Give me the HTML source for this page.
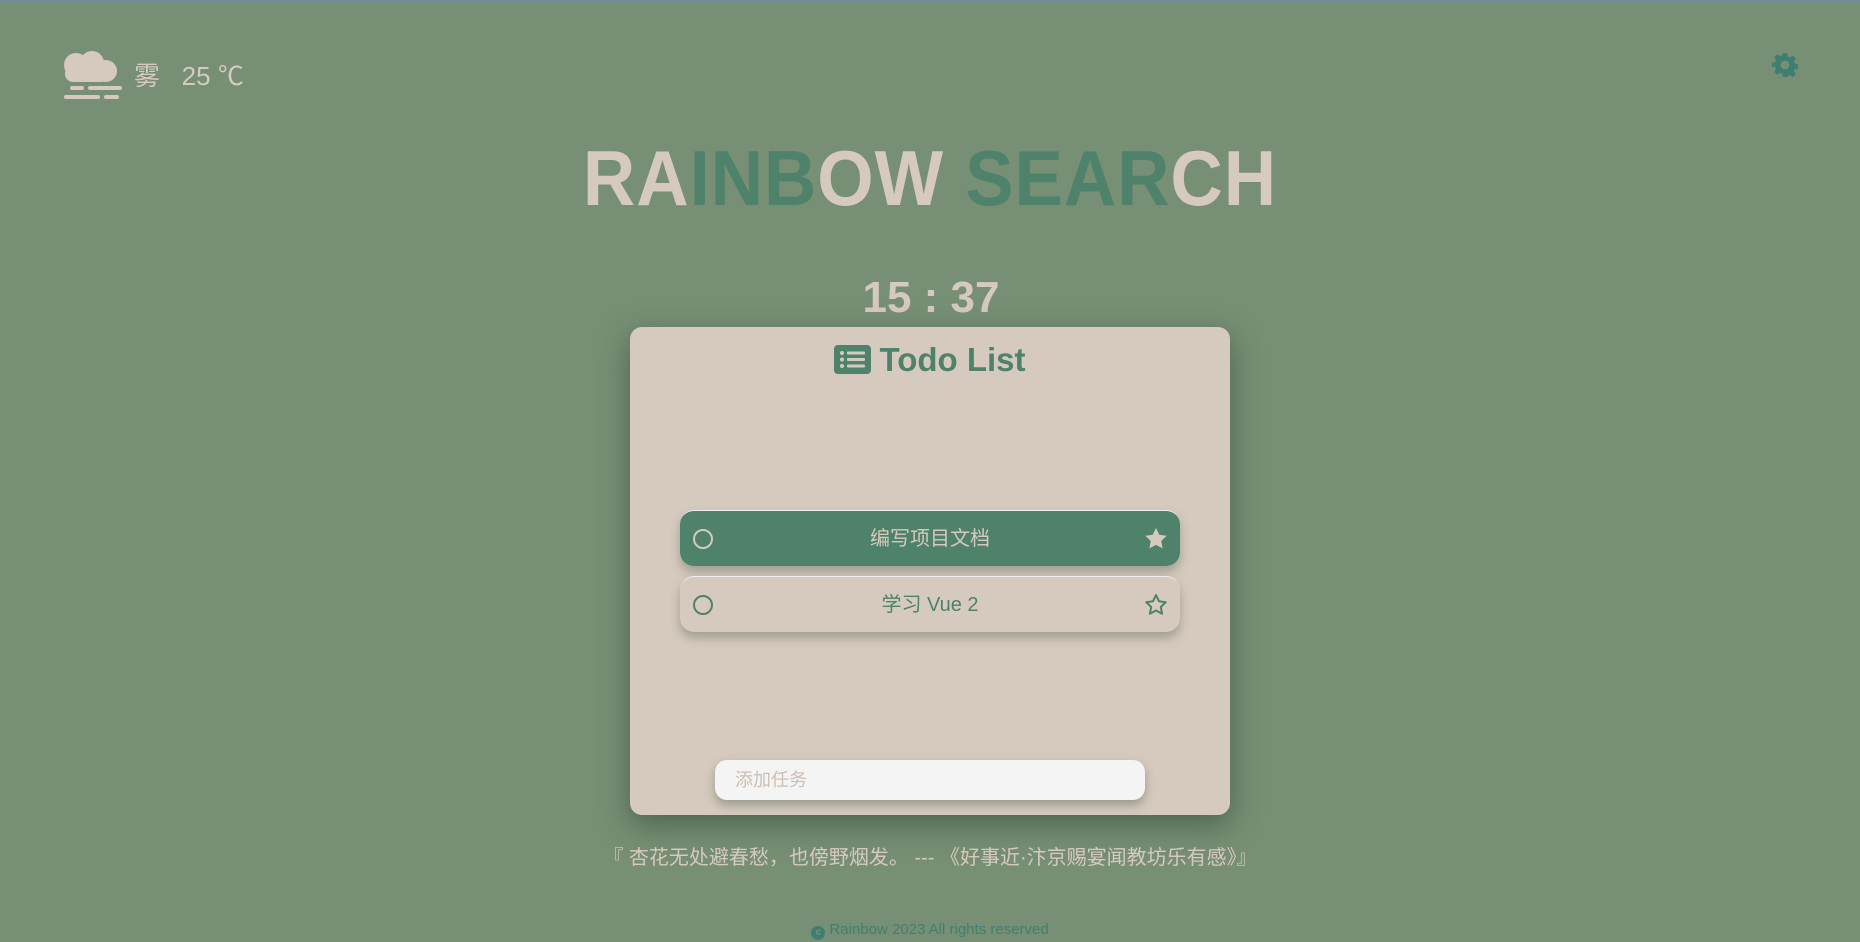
<!DOCTYPE html>
<html><head><meta charset="utf-8"><style>
*{margin:0;padding:0;box-sizing:border-box}
html,body{width:1860px;height:942px;overflow:hidden;background:#778f75;font-family:"Liberation Sans","Noto Sans CJK SC",sans-serif;position:relative}
body{border-top:1px solid #6e8aa0}
.abs{position:absolute}
.weather{left:134px;top:55px;font-size:26px;color:#d6c9bd;white-space:nowrap}
.logo{left:520px;top:135px;width:820px;text-align:center;font-size:78px;font-weight:bold;color:#d6c9bd;letter-spacing:1px;transform:scaleX(0.93);font-family:"Liberation Sans",sans-serif;line-height:84px;white-space:nowrap}
.g{color:#4f826a}
.time{left:780px;top:272px;width:302px;text-align:center;font-size:44px;font-weight:bold;color:#d6c9bd}
.card{left:630px;top:326px;width:600px;height:488px;background:#d6cabe;border-radius:12px;box-shadow:0 10px 30px rgba(40,55,40,.5)}
.title{left:0;top:14px;width:600px;text-align:center;font-size:33px;font-weight:bold;color:#4f826a}
.item{left:50px;width:500px;height:56px;border-radius:14px;font-size:20px;text-align:center;line-height:56px;box-shadow:0 6px 10px rgba(60,80,60,.35);border-top:1px solid #eee}
.i1{top:183px;background:#4f826a;color:#d6c9bd}
.i2{top:249px;background:#d6cabe;color:#4f826a}
.circ{position:absolute;left:13px;top:18px;width:20px;height:20px;border-radius:50%;border:2px solid currentColor}
.star{position:absolute;right:12px;top:16px}
.input{left:85px;top:433px;width:430px;height:40px;background:#f4f4f4;border-radius:12px;box-shadow:0 5px 10px rgba(60,80,60,.4);font-size:18px;color:#cdbfb3;line-height:40px;padding-left:20px}
.quote{left:0;top:840px;width:1860px;text-align:center;font-size:20px;color:#d6c9bd}
.foot{left:0;top:920px;width:1860px;text-align:center;font-size:15px;color:#3f7f73}
</style></head><body>
<svg class="abs" style="left:62px;top:50px" width="64" height="52" viewBox="0 0 64 52">
<g fill="#d6c9bd"><circle cx="14" cy="14" r="12"/><circle cx="30" cy="12" r="12"/><circle cx="44" cy="20" r="11"/><rect x="3" y="14" width="44" height="17" rx="8"/>
<rect x="8" y="35" width="14" height="4" rx="2"/><rect x="26" y="35" width="34" height="4" rx="2"/><rect x="2" y="44" width="36" height="4" rx="2"/><rect x="42" y="44" width="15" height="4" rx="2"/></g></svg>
<div class="abs weather">雾&nbsp;&nbsp; 25 ℃</div>
<svg class="abs" style="left:1772px;top:51px" width="26" height="26" viewBox="0 0 24 24"><path fill="#3f7f73" d="M10 1h4l.6 3 2 1 2.6-1.7 2.8 2.8L20.3 8.7l.8 2 2.9.6v4l-2.9.6-.8 2 1.7 2.6-2.8 2.8-2.6-1.7-2 .8L14 23h-4l-.6-2.8-2-.8-2.6 1.7-2.8-2.8 1.7-2.6-.8-2L0 14v-4l2.9-.6.8-2L2 4.8 4.8 2l2.6 1.7 2-1zM12 8a4 4 0 100 8 4 4 0 000-8z"/></svg>
<div class="abs logo">RA<span class="g">INB</span>OW <span class="g">SEAR</span>CH</div>
<div class="abs time">15 : 37</div>
<div class="abs card">
 <div class="abs title"><svg width="37" height="29" viewBox="0 0 37 29" style="vertical-align:-3px;margin-right:8px"><rect width="37" height="29" rx="4" fill="#4f826a"/><g fill="#d6c9bd"><circle cx="8" cy="8" r="2"/><circle cx="8" cy="14.5" r="2"/><circle cx="8" cy="21" r="2"/><rect x="13" y="6.5" width="18" height="3" rx="1"/><rect x="13" y="13" width="18" height="3" rx="1"/><rect x="13" y="19.5" width="18" height="3" rx="1"/></g></svg>Todo List</div>
 <div class="abs item i1"><span class="circ"></span>编写项目文档<svg class="star" width="24" height="23" viewBox="0 0 24 23"><path fill="#d6c9bd" d="M12 1l3.3 6.8 7.4 1-5.4 5.2 1.3 7.4L12 17.9l-6.6 3.5 1.3-7.4L1.3 8.8l7.4-1z"/></svg></div>
 <div class="abs item i2"><span class="circ"></span>学习 Vue 2<svg class="star" width="24" height="23" viewBox="0 0 24 23"><path fill="none" stroke="#4f826a" stroke-width="2" stroke-linejoin="round" d="M12 2l3 6.3 6.8.9-5 4.8 1.3 6.8L12 17.5l-6.1 3.3 1.3-6.8-5-4.8 6.8-.9z"/></svg></div>
 <div class="abs input">添加任务</div>
</div>
<div class="abs quote">『 杏花无处避春愁，也傍野烟发。 --- 《好事近·汴京赐宴闻教坊乐有感》』</div>
<div class="abs foot"><span style="display:inline-block;width:14px;height:14px;border-radius:50%;background:#3f7f73;color:#778f75;font-size:10px;line-height:14px;font-weight:bold;vertical-align:-1px">c</span> Rainbow 2023 All rights reserved</div>
</body></html>
